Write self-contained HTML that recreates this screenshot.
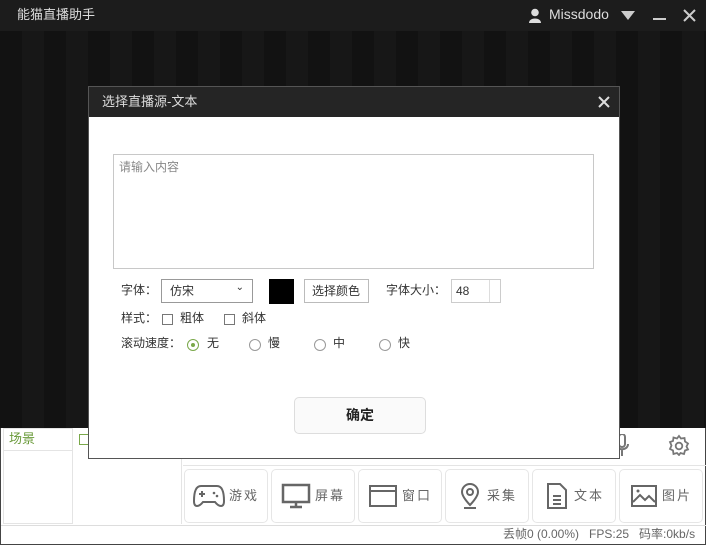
<!DOCTYPE html>
<html><head><meta charset="utf-8"><style>
*{margin:0;padding:0;box-sizing:border-box}
body{width:706px;height:545px;overflow:hidden;position:relative;background:#111;font-family:"Liberation Sans","Noto Sans CJK SC",sans-serif;font-size:12px;color:#333;line-height:1.2}
.abs{position:absolute}
.title{left:0;top:0;width:706px;height:31px;background:#1c1c1c;color:#ddd;font-size:13px}
.video{left:0;top:31px;width:706px;height:397px;background:repeating-linear-gradient(90deg,#121212 0 22px,#171717 22px 44px),#141414}
.bottom{left:0;top:428px;width:706px;height:117px;background:#fff;border:1px solid #444;border-top:none}
.btn{top:469px;width:84px;height:54px;border:1px solid #e6e6e6;border-radius:5px;background:#fff;color:#666;font-size:13px;display:flex;align-items:center;justify-content:center;gap:4px;letter-spacing:2px}
.dlg{left:88px;top:86px;width:532px;height:373px;background:#fff;border:1px solid #555}
.dt{left:0;top:0;width:530px;height:30px;background:#252525;color:#ddd;font-size:13px}
.chk{width:11px;height:11px;border:1px solid #777;background:#fff}
.rad{width:12px;height:12px;border:1px solid #999;border-radius:50%}
</style></head><body>
<div class="abs title">
 <div class="abs" style="left:17px;top:7px">能猫直播助手</div>
 <svg class="abs" style="left:528px;top:8px" width="14" height="15" viewBox="0 0 14 15"><circle cx="7" cy="4.5" r="3.8" fill="#ddd"/><path d="M1 15 C1 9 13 9 13 15Z" fill="#ddd"/></svg>
 <div class="abs" style="left:549px;top:6px;font-size:14px">Missdodo</div>
 <svg class="abs" style="left:621px;top:11px" width="14" height="9"><path d="M0 0H14L7 9Z" fill="#ccc"/></svg>
 <div class="abs" style="left:653px;top:18px;width:13px;height:2px;background:#ccc"></div>
 <svg class="abs" style="left:683px;top:9px" width="13" height="13"><path d="M1 1L12 12M12 1L1 12" stroke="#ccc" stroke-width="2"/></svg>
</div>
<div class="abs video"></div>
<div class="abs bottom">
 <div class="abs" style="left:2px;top:0;width:70px;height:96px;border:1px solid #e4e4e4"></div>
 <div class="abs" style="left:3px;top:0;width:68px;height:23px;border-bottom:1px solid #e4e4e4;color:#6a9a3a;padding:3px 5px;font-size:13px">场景</div>
 <div class="abs" style="left:73px;top:0;width:108px;height:96px;border-right:1px solid #e4e4e4"></div>
 <div class="abs" style="left:78px;top:6px;width:11px;height:11px;border:1px solid #7aa84a"></div>
 <div class="abs" style="left:182px;top:37px;width:524px;height:1px;background:#e4e4e4"></div>
 <svg class="abs" style="left:614px;top:6px" width="14" height="24"><rect x="4" y="0" width="6" height="13" rx="3" fill="none" stroke="#777" stroke-width="2"/><path d="M1 10C1 17 13 17 13 10M7 16V22" fill="none" stroke="#777" stroke-width="2"/></svg>
 <svg class="abs" style="left:667px;top:6px" width="22" height="22" viewBox="0 0 22 22"><path d="M11 2L13 4.5L16.5 4L17 7.5L20 9.5L18.5 12.5L20 15.5L17 16.5L16 20L12.5 19L11 21L9 19L5.5 20L5 16.5L2 15L3.5 11.5L2 8L5 7L5.5 3.5L9 4.5Z" fill="none" stroke="#777" stroke-width="1.8"/><circle cx="11" cy="12" r="3.3" fill="none" stroke="#777" stroke-width="1.8"/></svg>
 <div class="abs" style="left:0;top:97px;width:706px;height:1px;background:#ddd"></div>
 <div class="abs" style="left:502px;top:99px;color:#666;font-size:12px">丢帧0 (0.00%)&nbsp;&nbsp; FPS:25 &nbsp; 码率:0kb/s</div>
</div>
<div class="abs btn" style="left:184px"><svg width="32" height="26" viewBox="0 0 32 26"><path d="M8 3H24C30 3 31 12 31 18C31 25 26 24 22 19H10C6 24 1 25 1 18C1 12 2 3 8 3Z" fill="none" stroke="#666" stroke-width="2"/><path d="M9 8V14M6 11H12" stroke="#666" stroke-width="2"/><circle cx="21" cy="10" r="1.3" fill="#666"/><circle cx="24" cy="13" r="1.3" fill="#666"/></svg>游戏</div>
<div class="abs btn" style="left:271px"><svg width="30" height="26"><rect x="2" y="2" width="26" height="17" fill="none" stroke="#666" stroke-width="2.5"/><path d="M15 19V24M9 24H21" stroke="#666" stroke-width="2.5"/></svg>屏幕</div>
<div class="abs btn" style="left:358px"><svg width="30" height="24"><rect x="2" y="2" width="26" height="20" fill="none" stroke="#666" stroke-width="2"/><path d="M2 7H28" stroke="#666" stroke-width="2"/></svg>窗口</div>
<div class="abs btn" style="left:445px"><svg width="26" height="26"><path d="M13 22C13 22 5 14 5 9A8 8 0 0 1 21 9C21 14 13 22 13 22Z" fill="none" stroke="#666" stroke-width="2"/><circle cx="13" cy="9" r="3" fill="none" stroke="#666" stroke-width="2"/><path d="M7 25H19" stroke="#666" stroke-width="2"/></svg> 采集</div>
<div class="abs btn" style="left:532px"><svg width="26" height="28"><path d="M4 2H16L22 8V26H4Z" fill="none" stroke="#666" stroke-width="2"/><path d="M9 14H17M9 18H17M9 22H17" stroke="#666" stroke-width="2"/></svg> 文本</div>
<div class="abs btn" style="left:619px"><svg width="28" height="24"><rect x="2" y="2" width="24" height="20" fill="none" stroke="#666" stroke-width="2"/><path d="M3 18L10 11L15 16L19 12L25 18" fill="none" stroke="#666" stroke-width="2"/><circle cx="8" cy="7" r="1.5" fill="#666"/></svg>图片</div>
<div class="abs dlg">
 <div class="abs dt"><div class="abs" style="left:13px;top:7px">选择直播源-文本</div>
  <svg class="abs" style="left:509px;top:9px" width="12" height="12"><path d="M1 1L11 11M11 1L1 11" stroke="#ddd" stroke-width="2"/></svg></div>
 <div class="abs" style="left:24px;top:67px;width:481px;height:115px;border:1px solid #c8c8c8;color:#888;padding:5px 5px;font-size:12px">请输入内容</div>
 <div class="abs" style="left:32px;top:196px">字体：</div>
 <div class="abs" style="left:72px;top:192px;width:92px;height:24px;border:1px solid #999;padding:4px 8px">仿宋<span style="position:absolute;right:8px;top:2px;font-size:10px">⌄</span></div>
 <div class="abs" style="left:180px;top:192px;width:25px;height:25px;background:#000"></div>
 <div class="abs" style="left:215px;top:192px;width:65px;height:24px;border:1px solid #bbb;padding:4px 7px">选择颜色</div>
 <div class="abs" style="left:297px;top:196px">字体大小：</div>
 <div class="abs" style="left:362px;top:192px;width:50px;height:24px;border:1px solid #ccc;padding:4px 4px">48<span style="position:absolute;right:0;top:0;width:11px;height:22px;border-left:1px solid #ddd"></span></div>
 <div class="abs" style="left:32px;top:224px">样式：</div>
 <div class="abs chk" style="left:73px;top:227px"></div><div class="abs" style="left:91px;top:224px">粗体</div>
 <div class="abs chk" style="left:135px;top:227px"></div><div class="abs" style="left:153px;top:224px">斜体</div>
 <div class="abs" style="left:32px;top:249px">滚动速度：</div>
 <div class="abs rad" style="left:98px;top:252px;border-color:#7aa84a"><div style="width:4px;height:4px;background:#7aa84a;border-radius:50%;margin:3px"></div></div><div class="abs" style="left:118px;top:249px">无</div>
 <div class="abs rad" style="left:160px;top:252px"></div><div class="abs" style="left:179px;top:249px">慢</div>
 <div class="abs rad" style="left:225px;top:252px"></div><div class="abs" style="left:244px;top:249px">中</div>
 <div class="abs rad" style="left:290px;top:252px"></div><div class="abs" style="left:309px;top:249px">快</div>
 <div class="abs" style="left:205px;top:310px;width:132px;height:37px;border:1px solid #ddd;border-radius:5px;background:#fafafa;text-align:center;line-height:35px;font-size:14px;font-weight:bold;color:#222">确定</div>
</div>
</body></html>
